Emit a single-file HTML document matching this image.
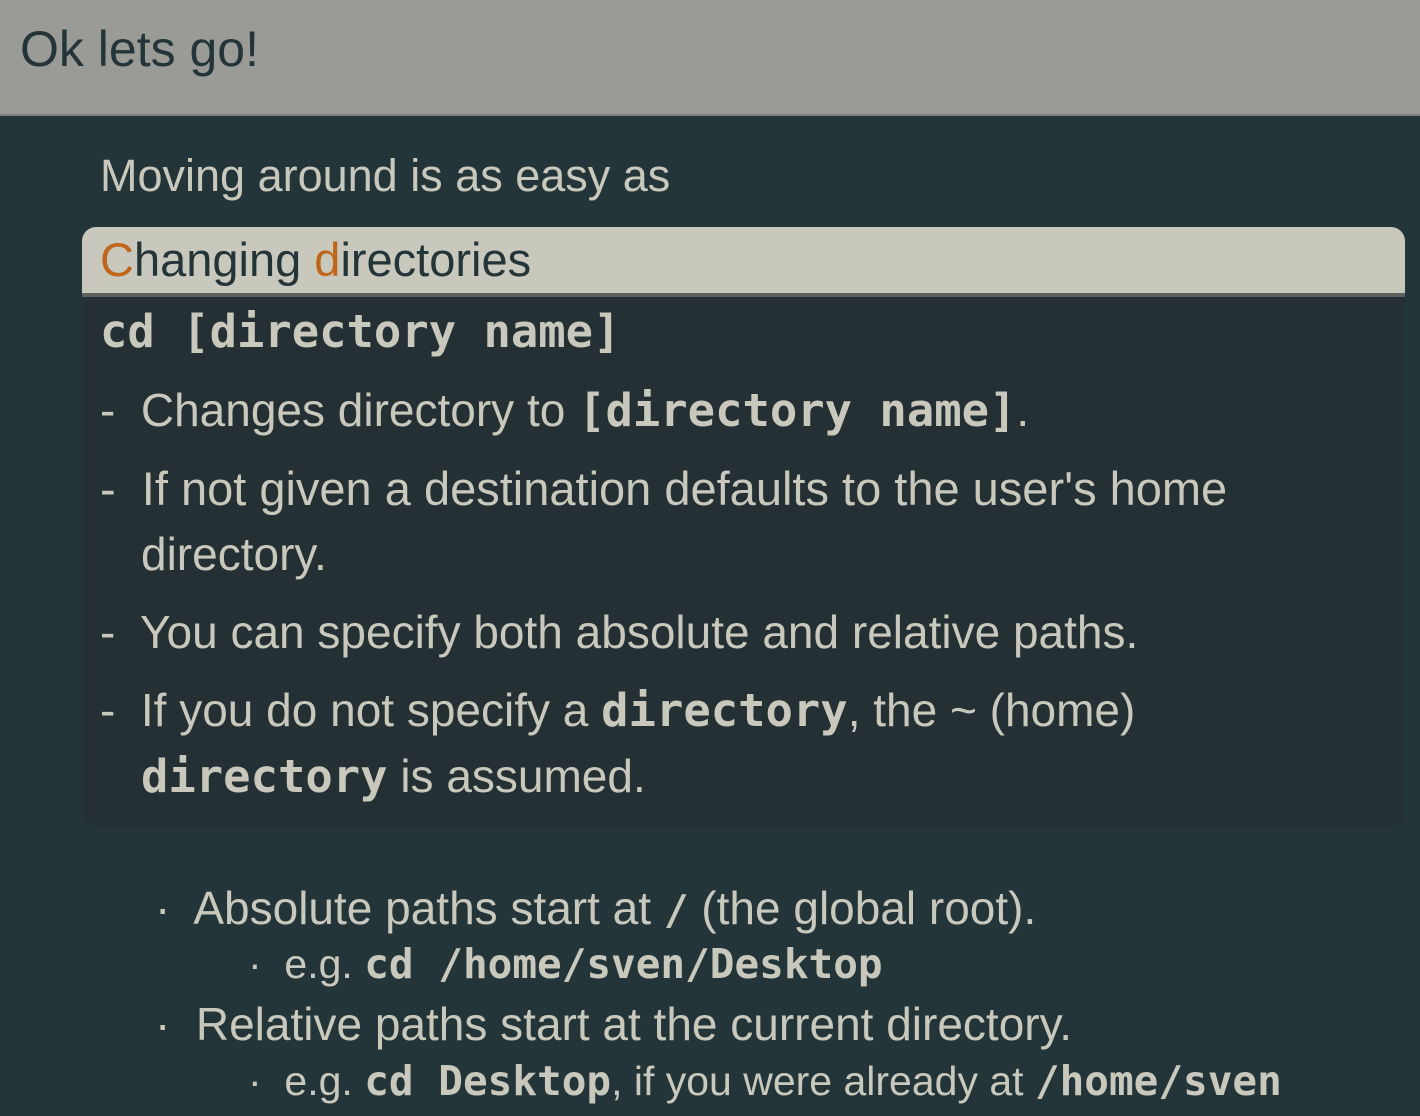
<!DOCTYPE html>
<html><head><style>
body{margin:0;width:1420px;height:1116px;overflow:hidden;background:#243539;font-family:"Liberation Sans",sans-serif;color:#c8c8bc;}
.hdr{position:absolute;left:0;top:0;width:1420px;height:114px;background:#9a9b96;border-bottom:2px solid #7d807c;}
.hdr span{position:absolute;left:20px;top:20px;font-size:50px;color:#243539;}
.t{position:absolute;white-space:nowrap;font-size:46px;}
.m{font-family:"DejaVu Sans Mono","Liberation Mono",monospace;font-weight:bold;}
.box{position:absolute;left:82px;top:227px;width:1323px;height:599px;background:#243033;border-radius:14px;}
.bt{position:absolute;left:82px;top:227px;width:1323px;height:66px;background:#c8c8bc;border-radius:14px 14px 0 0;border-bottom:4px solid #5e625c;}
.o{color:#c0661a}
</style></head><body>
<div class="hdr"><span>Ok lets go!</span></div>
<div class="t" style="left:100px;top:150px;font-size:45px">Moving around is as easy as</div>
<div class="box"></div>
<div class="bt"></div>
<div class="t" style="left:100px;top:232px;color:#243539;font-size:47px"><span class="o">C</span>hanging <span class="o">d</span>irectories</div>
<div class="t m" style="left:100px;top:305px;font-size:45.5px">cd [directory name]</div>
<div class="t" style="left:100px;top:383px">-&nbsp; Changes directory to <span class="m" style="font-size:45.5px">[directory name]</span>.</div>
<div class="t" style="left:100px;top:461px;font-size:47px">-&nbsp; If not given a destination defaults to the user's home</div>
<div class="t" style="left:141px;top:527px">directory.</div>
<div class="t" style="left:100px;top:605px">-&nbsp; You can specify both absolute and relative paths.</div>
<div class="t" style="left:100px;top:683px">-&nbsp; If you do not specify a <span class="m" style="font-size:45.5px">directory</span>, the ~ (home)</div>
<div class="t" style="left:141px;top:749px"><span class="m" style="font-size:45.5px">directory</span> is assumed.</div>
<div class="t" style="left:155px;top:881px">·&nbsp; Absolute paths start at <span class="m" style="font-size:41px">/</span> (the global root).</div>
<div class="t" style="left:248px;top:940px;font-size:41px">·&nbsp; e.g. <span class="m" style="font-size:41px">cd /home/sven/Desktop</span></div>
<div class="t" style="left:155px;top:997px">·&nbsp; Relative paths start at the current directory.</div>
<div class="t" style="left:248px;top:1057px;font-size:41px">·&nbsp; e.g. <span class="m" style="font-size:41px">cd Desktop</span>, if you were already at <span class="m" style="font-size:41px">/home/sven</span></div>
</body></html>
